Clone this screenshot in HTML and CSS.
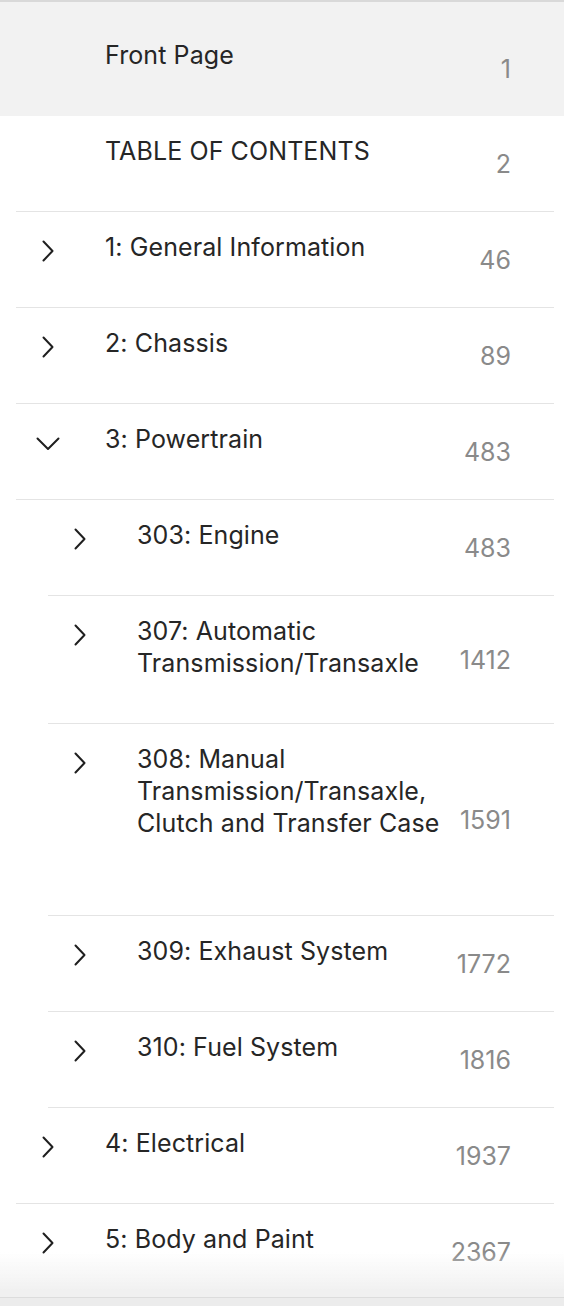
FILE: index.html
```html
<!DOCTYPE html>
<html lang="en">
<head>
<meta charset="utf-8">
<title>Contents</title>
<link rel="stylesheet" href="styles.css">
</head>
<body>
<nav class="toc">
  <ul class="toc-list">
    <li class="row row--top row--current">
      <span class="twist"></span>
      <span class="title">Front Page</span>
      <span class="page">1</span>
    </li>
    <li class="row row--l1">
      <span class="twist"></span>
      <span class="title">TABLE OF CONTENTS</span>
      <span class="page">2</span>
    </li>
    <li class="row row--l1">
      <span class="twist"><svg class="chev" viewBox="0 0 12 22"><path d="M1.5 1.5 L10.5 11 L1.5 20.5"/></svg></span>
      <span class="title">1: General Information</span>
      <span class="page">46</span>
    </li>
    <li class="row row--l1">
      <span class="twist"><svg class="chev" viewBox="0 0 12 22"><path d="M1.5 1.5 L10.5 11 L1.5 20.5"/></svg></span>
      <span class="title">2: Chassis</span>
      <span class="page">89</span>
    </li>
    <li class="row row--l1">
      <span class="twist"><svg class="chev chev--down" viewBox="0 0 24 14"><path d="M1.5 1.5 L12 12 L22.5 1.5"/></svg></span>
      <span class="title">3: Powertrain</span>
      <span class="page">483</span>
    </li>
    <li class="row row--l2">
      <span class="twist"><svg class="chev" viewBox="0 0 12 22"><path d="M1.5 1.5 L10.5 11 L1.5 20.5"/></svg></span>
      <span class="title">303: Engine</span>
      <span class="page">483</span>
    </li>
    <li class="row row--l2">
      <span class="twist"><svg class="chev" viewBox="0 0 12 22"><path d="M1.5 1.5 L10.5 11 L1.5 20.5"/></svg></span>
      <span class="title">307: Automatic Transmission/Transaxle</span>
      <span class="page">1412</span>
    </li>
    <li class="row row--l2 row--tall">
      <span class="twist"><svg class="chev" viewBox="0 0 12 22"><path d="M1.5 1.5 L10.5 11 L1.5 20.5"/></svg></span>
      <span class="title">308: Manual Transmission/Transaxle, Clutch and Transfer Case</span>
      <span class="page">1591</span>
    </li>
    <li class="row row--l2">
      <span class="twist"><svg class="chev" viewBox="0 0 12 22"><path d="M1.5 1.5 L10.5 11 L1.5 20.5"/></svg></span>
      <span class="title">309: Exhaust System</span>
      <span class="page">1772</span>
    </li>
    <li class="row row--l2">
      <span class="twist"><svg class="chev" viewBox="0 0 12 22"><path d="M1.5 1.5 L10.5 11 L1.5 20.5"/></svg></span>
      <span class="title">310: Fuel System</span>
      <span class="page">1816</span>
    </li>
    <li class="row row--l1">
      <span class="twist"><svg class="chev" viewBox="0 0 12 22"><path d="M1.5 1.5 L10.5 11 L1.5 20.5"/></svg></span>
      <span class="title">4: Electrical</span>
      <span class="page">1937</span>
    </li>
    <li class="row row--l1">
      <span class="twist"><svg class="chev" viewBox="0 0 12 22"><path d="M1.5 1.5 L10.5 11 L1.5 20.5"/></svg></span>
      <span class="title">5: Body and Paint</span>
      <span class="page">2367</span>
    </li>
  </ul>
</nav>
<div class="fade"></div>
</body>
</html>
```

FILE: styles.css
```css
html, body {
  margin: 0;
  padding: 0;
  background: #ffffff;
}

body {
  font-family: Inter, "Liberation Sans", Arial, sans-serif;
  color: #262626;
  border-top: 2px solid #d9d9d9;
  height: 1304px;
  overflow: hidden;
}

.toc-list {
  list-style: none;
  margin: 0;
  padding: 0;
}

.row {
  display: flex;
  align-items: flex-start;
  padding: 0 43px 0 0;
  margin-right: 10px;
  border-bottom: 1px solid #e4e4e4;
  font-size: 25px;
  line-height: 32px;
}

.row--top {
  margin-right: 0;
  padding-right: 53px;
  border-bottom: none;
  background: #f2f2f2;
}

.row--top .twist {
  margin-left: 16px;
}

.row--l1 {
  margin-left: 16px;
}

.row--l2 {
  margin-left: 48px;
}

.twist {
  flex: 0 0 89px;
  height: 32px;
  margin-top: 19px;
  display: flex;
  align-items: center;
  justify-content: flex-start;
}

.chev {
  width: 12px;
  height: 22px;
  margin-left: 26px;
  margin-top: 8px;
  fill: none;
  stroke: #1f1f1f;
  stroke-width: 2;
  stroke-linecap: round;
  stroke-linejoin: round;
}

.chev--down {
  width: 24px;
  height: 14px;
  margin-left: 20px;
  margin-top: 10px;
}

.title {
  flex: 1 1 auto;
  padding: 19px 0 44px;
  color: #262626;
  letter-spacing: 0.1px;
}

.row--top .title {
  padding-top: 37px;
  padding-bottom: 45px;
}

.row--tall .title {
  padding-bottom: 76px;
}

.page {
  flex: 0 0 auto;
  min-width: 56px;
  padding-left: 8px;
  align-self: center;
  text-align: right;
  color: #8a8a8a;
}

.row--top .page {
  padding-top: 20px;
}

.fade {
  position: fixed;
  left: 0;
  right: 0;
  bottom: 0;
  height: 46px;
  background: linear-gradient(to bottom, rgba(242,242,242,0) 0%, rgba(240,240,240,0.9) 80%, #f0f0f0 82%);
  border-bottom: 8px solid #ececec;
  pointer-events: none;
}

.fade::after {
  content: "";
  position: absolute;
  left: 0;
  right: 0;
  bottom: 0;
  height: 1px;
  background: #dcdcdc;
}
```
